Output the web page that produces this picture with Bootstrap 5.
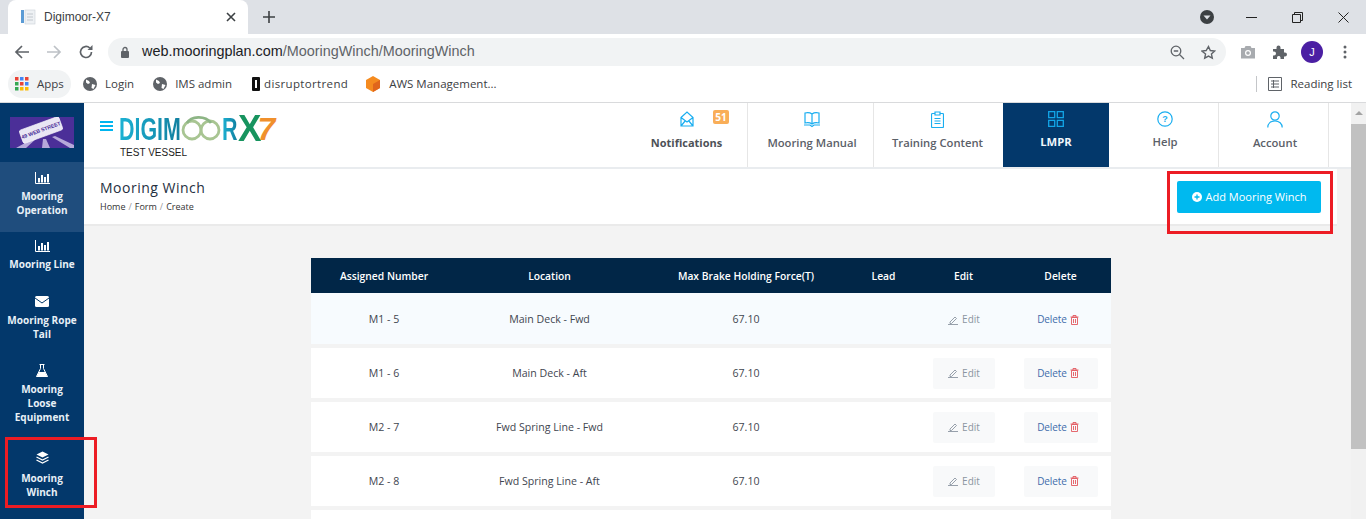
<!DOCTYPE html>
<html lang="en">
<head>
<meta charset="UTF-8">
<title>Digimoor-X7</title>
<link href="https://cdn.jsdelivr.net/npm/bootstrap@5.3.0/dist/css/bootstrap.min.css" rel="stylesheet">
<style>
html, body { height: 519px; overflow: hidden; }
body { font-family: "Open Sans", sans-serif; background: #f3f3f3; position: relative; }
.chrome-font { font-family: "Liberation Sans", sans-serif; color: #3c4043; }
.tabstrip { height: 34px; background: #dee1e6; }
.tab-item { width: 240px; margin-left: 8px; height: 34px; background: #fff; border-radius: 8px 8px 0 0; padding: 0 12px; font-size: 12px; }
.tab-new { margin-left: 14px; }
.win-btns { margin-left: auto; }
.win-btn { width: 46px; }
.toolbar { height: 34px; background: #fff; padding: 2px 0 0 14px; }
.nav-ic { width: 16px; height: 16px; margin-right: 16px; }
.omnibox { width: 1118px; height: 28px; background: #f1f3f4; border-radius: 14px; padding: 0 10px 0 12px; font-size: 14.4px; color: #5f6368; }
.omnibox b { font-weight: 400; color: #202124; }
.avatar { width: 22px; height: 22px; border-radius: 50%; background: #4b1fa3; color: #fff; font-size: 11px; }
.bookmarks { height: 35px; background: #fff; border-bottom: 1px solid #d9dadc; font-family: "Open Sans", sans-serif; font-size: 11.5px; padding: 0 14px 2px 8px; }
.bm-apps { height: 28px; background: #f1f3f4; border-radius: 14px; width: 63px; padding-left: 7px; }
.bm-item { margin-left: 12px; }
.bm-wide { letter-spacing: .35px; }
.bm-sep { width: 1px; height: 16px; background: #c4c6c9; margin-right: 11px; }
.app-area { height: 416px; }
.side-bar { width: 84px; background: #03386b; color: #e8f0f7; flex-shrink: 0; }
.side-logo { height: 59px; padding-top: 14px; }
.side-item { font-size: 10px; font-weight: 700; line-height: 14px; text-align: center; padding: 10px 2px 0; }
.side-item svg { display: block; margin: 0 auto 5px; }
.side-active { background: #1f4d7d; height: 70px; }
.main-col { min-width: 0; }
.top-head { height: 66px; background: #fff; border-bottom: 2px solid #e9ecef; }
.brand-box { width: 251px; padding: 10px 0 0 16px; }
.burger { width: 13px; height: 10px; border-top: 2px solid #00b5ef; border-bottom: 2px solid #00b5ef; position: relative; margin: 8px 6px 0 0; flex-shrink: 0; }
.burger::after { content: ""; position: absolute; left: 0; right: 0; top: 2px; height: 2px; background: #00b5ef; }
.brand-line { height: 32px; }
.brand-name { display: inline-block; font-family: "Liberation Sans", sans-serif; font-weight: 700; font-size: 32px; line-height: 32px; transform: scaleX(.67); transform-origin: left center; background: linear-gradient(90deg, #1cb2d4, #127f9f); -webkit-background-clip: text; background-clip: text; color: transparent; }
.brand-digim { margin-right: -31px; }
.brand-r { margin-right: -8px; }
.brand-x { display: inline-block; font-family: "Liberation Sans", sans-serif; font-weight: 700; font-size: 37px; line-height: 32px; width: 20px; color: #17945f; transform: scaleX(.95); transform-origin: left center; }
.brand-seven { display: inline-block; font-family: "Liberation Sans", sans-serif; font-weight: 700; font-size: 32px; line-height: 32px; color: #f0902c; font-style: italic; }
.vessel { font-family: "Liberation Sans", sans-serif; font-size: 10px; line-height: 12px; color: #222; margin: 2px 0 0 1px; }
.top-link { height: 64px; text-align: center; font-size: 11.25px; font-weight: 600; color: #5b6068; border-left: 1px solid #e6e6e6; padding-top: 8px; position: relative; }
.top-link svg { display: block; margin: 0 auto 7px; }
.link-note { width: 116px; border-left: 0; color: #4d5157; font-weight: 700; padding-right: 5px; font-size: 11px; line-height: 17px; }
.link-manual { width: 126px; padding-left: 3px; }
.link-train { width: 126px; padding-left: 2px; }
.link-lmpr { width: 106px; margin-left: 4px; border-left: 0; background: #03386b; color: #f1f6fb; font-weight: 700; }
.link-help { width: 109px; border-left: 0; padding-left: 3px; }
.link-account { width: 111px; border-right: 1px solid #e6e6e6; padding-left: 3px; }
.note-badge { position: absolute; left: 82px; top: 7px; background: #f9ae58; color: #fff; font-size: 10px; font-weight: 700; border-radius: 2px; line-height: 14px; height: 14px; width: 16px; }
.page-head { height: 57px; width: 1253px; background: #fff; border-bottom: 2px solid #eaeaea; padding: 9px 16px 0; }
.page-title { font-size: 14px; line-height: 20px; color: #253041; font-weight: 400; letter-spacing: .5px; margin: 0; }
.crumbs { font-size: 9px; line-height: 17px; color: #333; }
.crumbs i { font-style: normal; color: #999; margin: 0 3px; }
.add-btn { background: #00b9ef; color: #fff; font-size: 11px; width: 144px; height: 32px; border-radius: 2px; margin-top: 3px; border: 0; padding: 0; }
.scroll-track { width: 15px; background: #f1f1f1; flex-shrink: 0; }
.scroll-thumb { height: 325px; background: #c1c1c1; margin-top: 17px; }
.scroll-up { width: 0; height: 0; border: 4px solid transparent; border-bottom: 4px solid #a3a3a3; border-top: 0; margin: 0 auto; position: relative; top: 8px; }
.table-box { width: 800px; margin: 32px 0 0 227px; }
.tb-head { height: 35px; background: #012647; color: #fff; font-size: 10.3px; font-weight: 600; padding-top: 2px; }
.tb-row { height: 50px; background: #fff; margin-bottom: 4px; font-size: 10.6px; color: #3f4650; }
.tb-first { height: 51px; background: #f7fbfe; padding-top: 2px; }
.tb-text { padding-top: 1px; }
.c1 { width: 146px; text-align: center; }
.c2 { width: 185px; text-align: center; }
.c3 { width: 208px; text-align: center; }
.c4 { width: 67px; text-align: center; }
.c5 { width: 93px; text-align: center; }
.c6 { width: 101px; text-align: center; }
.act-edit { width: 62px; height: 31px; background: #f8f9fa; color: #8b95a1; font-size: 10px; margin: 0 auto; border-radius: 2px; padding-left: 1px; }
.act-del { width: 74px; height: 31px; background: #f8f9fa; color: #3f6cab; font-size: 10px; letter-spacing: -.1px; margin: 0 auto; border-radius: 2px; padding-right: 5px; }
.act-del svg { margin-left: 3px; }
.tb-first .act-edit, .tb-first .act-del { background: #f7fbfe; }
.mark-box { position: absolute; border: 3px solid #ec1c24; pointer-events: none; }
.mark-left { left: 5px; top: 437px; width: 92px; height: 71px; }
.mark-right { left: 1167px; top: 171px; width: 166px; height: 63px; }
</style>
</head>
<body>

<div class="chrome-font">
  <div class="tabstrip d-flex">
    <div class="tab-item d-flex align-items-center">
      <svg width="16" height="16" viewBox="0 0 16 16" class="me-2"><rect x="1" y="1" width="3" height="13" fill="#5b9bd5"/><rect x="5" y="1" width="10" height="14" fill="#eef1f4" stroke="#c9d0d6" stroke-width=".6"/><path d="M7 5h6M7 8h6M7 11h6" stroke="#c2c8ce"/></svg>
      <span>Digimoor-X7</span>
      <svg width="10" height="10" viewBox="0 0 10 10" class="ms-auto"><path d="M1 1l8 8M9 1l-8 8" stroke="#3c4043" stroke-width="1.6"/></svg>
    </div>
    <div class="tab-new d-flex align-items-center"><svg width="14" height="14" viewBox="0 0 14 14"><path d="M7 1v12M1 7h12" stroke="#3c4043" stroke-width="1.6"/></svg></div>
    <div class="win-btns d-flex align-items-center">
      <svg width="14" height="14" viewBox="0 0 14 14" style="margin-right:14px"><circle cx="7" cy="7" r="7" fill="#3c4043"/><path d="M3.5 5.5h7L7 9.5z" fill="#dee1e6"/></svg>
      <div class="win-btn text-center"><svg width="11" height="11" viewBox="0 0 11 11"><path d="M0 5.5h11" stroke="#222"/></svg></div>
      <div class="win-btn text-center"><svg width="11" height="11" viewBox="0 0 11 11"><path d="M.5 2.5h8v8h-8zM2.5 2.5v-2h8v8h-2" fill="none" stroke="#222"/></svg></div>
      <div class="win-btn text-center"><svg width="11" height="11" viewBox="0 0 11 11"><path d="M.5.5l10 10M10.500.5l-10 10" stroke="#222"/></svg></div>
    </div>
  </div>
  <div class="toolbar d-flex align-items-center">
    <svg class="nav-ic" viewBox="0 0 16 16"><path d="M15 8H2M8 2L2 8l6 6" fill="none" stroke="#5f6368" stroke-width="1.7"/></svg>
    <svg class="nav-ic" viewBox="0 0 16 16"><path d="M1 8h13M8 2l6 6-6 6" fill="none" stroke="#bdc1c6" stroke-width="1.7"/></svg>
    <svg class="nav-ic" viewBox="0 0 16 16" style="margin-right:14px"><path d="M13.500 8a5.500 5.500 0 1 1-1.700-4" fill="none" stroke="#5f6368" stroke-width="1.7"/><path d="M14.500 1v5h-5z" fill="#5f6368"/></svg>
    <div class="omnibox d-flex align-items-center">
      <svg width="10" height="12" viewBox="0 0 10 12" class="me-2"><rect x="1" y="5" width="8" height="7" rx="1" fill="#5f6368"/><path d="M3 5V3.500a2 2 0 0 1 4 0V5" fill="none" stroke="#5f6368" stroke-width="1.300"/></svg>
      <span class="ms-1"><b>web.mooringplan.com</b>/MooringWinch/MooringWinch</span>
      <svg width="15" height="15" viewBox="0 0 15 15" class="ms-auto" style="margin-right:16px"><circle cx="6" cy="6" r="4.800" fill="none" stroke="#5f6368" stroke-width="1.300"/><path d="M9.500 9.500l4.500 4.500M3.800 6h4.400" stroke="#5f6368" stroke-width="1.300"/></svg>
      <svg width="15" height="15" viewBox="0 0 24 24"><path d="M12 2.500l2.900 6.300 6.900.8-5.100 4.700 1.400 6.800-6.100-3.400-6.100 3.400 1.400-6.800L1.300 9.600l6.900-.8z" fill="none" stroke="#5f6368" stroke-width="2.200"/></svg>
    </div>
    <svg width="16" height="14" viewBox="0 0 16 14" style="margin-left:14px"><path d="M1 3h3.500l1-2h5l1 2H15v10.500H1z" fill="#a8abaf"/><circle cx="8" cy="8" r="3" fill="#fff"/><circle cx="8" cy="8" r="1.800" fill="#a8abaf"/></svg>
    <svg width="16" height="16" viewBox="0 0 16 16" style="margin-left:16px"><path d="M1 5h3.500V3.500a2 2 0 0 1 4 0V5H12v3.500h1a2 2 0 0 1 0 4h-1V15H8.500v-1.500a1.800 1.800 0 0 0-3.500 0V15H1v-3.500h1a2 2 0 0 0 0-4H1z" fill="#5f6368"/></svg>
    <div class="avatar d-flex align-items-center justify-content-center" style="margin-left:13px">J</div>
    <svg width="4" height="14" viewBox="0 0 4 14" style="margin-left:20px"><circle cx="2" cy="2" r="1.500" fill="#5f6368"/><circle cx="2" cy="7" r="1.500" fill="#5f6368"/><circle cx="2" cy="12" r="1.500" fill="#5f6368"/></svg>
  </div>
  <div class="bookmarks d-flex align-items-center">
    <div class="bm-apps d-flex align-items-center">
      <svg width="14" height="14" viewBox="0 0 14 14" class="me-2"><g><rect x="0" y="0" width="3.500" height="3.500" fill="#ea4335"/><rect x="5" y="0" width="3.500" height="3.500" fill="#4285f4"/><rect x="10" y="0" width="3.500" height="3.500" fill="#ea4335"/><rect x="0" y="5" width="3.500" height="3.500" fill="#34a853"/><rect x="5" y="5" width="3.500" height="3.500" fill="#ea4335"/><rect x="10" y="5" width="3.500" height="3.500" fill="#4285f4"/><rect x="0" y="10" width="3.500" height="3.500" fill="#34a853"/><rect x="5" y="10" width="3.500" height="3.500" fill="#fbbc04"/><rect x="10" y="10" width="3.500" height="3.500" fill="#fbbc04"/></g></svg>
      <span>Apps</span>
    </div>
    <div class="bm-item d-flex align-items-center"><svg width="14" height="14" viewBox="0 0 14 14" class="me-2"><circle cx="7" cy="7" r="7" fill="#5f6368"/><path d="M3 2.500l3 1.500 1 2-2 1-2-1.500zM9 7l3.500 1-2 4-2-1z" fill="#fff"/></svg><span>Login</span></div>
    <div class="bm-item d-flex align-items-center" style="margin-left:19px"><svg width="14" height="14" viewBox="0 0 14 14" class="me-2"><circle cx="7" cy="7" r="7" fill="#5f6368"/><path d="M3 2.500l3 1.500 1 2-2 1-2-1.500zM9 7l3.500 1-2 4-2-1z" fill="#fff"/></svg><span>IMS admin</span></div>
    <div class="bm-item d-flex align-items-center" style="margin-left:20px"><svg width="8" height="14" viewBox="0 0 8 14" class="me-1"><rect width="8" height="14" rx="1" fill="#111"/><rect x="3" y="3" width="2" height="8" fill="#fff"/></svg><span class="bm-wide">disruptortrend</span></div>
    <div class="bm-item d-flex align-items-center" style="margin-left:17px"><svg width="16" height="16" viewBox="0 0 16 16" class="me-2"><path d="M8 0l7 4v8l-7 4-7-4V4z" fill="#f58b1f"/><path d="M8 8l7-4v8l-7 4z" fill="#e0661c"/></svg><span>AWS Management...</span></div>
    <div class="bm-sep ms-auto"></div>
    <svg width="14" height="14" viewBox="0 0 14 14" class="me-2"><path d="M.5.5h13v13H.5z" fill="none" stroke="#5f6368"/><path d="M3 4h8M3 7h8M3 10h8M5.500 3v8" stroke="#5f6368"/></svg>
    <span>Reading list</span>
  </div>
</div>

<div class="app-area d-flex overflow-hidden">
  <nav class="side-bar">
    <div class="side-logo">
      <svg width="64" height="31" viewBox="0 0 64 31" class="d-block" style="margin-left:10px">
        <rect width="64" height="31" fill="#4b2f98"/>
        <path d="M6 31L24 21h3L16 31zM32 31l1-9h3l4 9zM60 31L42 20l3-1 19 9v3z" fill="#b7a9da"/>
        <g transform="rotate(-20 31 13)"><rect x="10" y="6" width="42" height="14" rx="2" fill="#e9e6f4" stroke="#fff" stroke-width=".6"/><text x="31" y="15" font-size="5.200" font-weight="700" text-anchor="middle" fill="#4b2f98" font-family="Liberation Sans, sans-serif">49 WEB STREET</text></g>
      </svg>
    </div>
    <div class="side-item side-active">
      <svg width="15" height="12" viewBox="0 0 15 12"><path d="M.5 0v11.500H15" fill="none" stroke="#fff"/><path d="M3 6h2v4.500H3zM6 3h2v7.500H6zM9 5h2v5.500H9zM12 2h2v8.500h-2z" fill="#fff"/></svg>
      Mooring<br>Operation
    </div>
    <div class="side-item" style="height:55px;padding-top:8px">
      <svg width="15" height="12" viewBox="0 0 15 12"><path d="M.5 0v11.500H15" fill="none" stroke="#fff"/><path d="M3 6h2v4.500H3zM6 3h2v7.500H6zM9 5h2v5.500H9zM12 2h2v8.500h-2z" fill="#fff"/></svg>
      Mooring Line
    </div>
    <div class="side-item" style="height:69px;padding-top:9px">
      <svg width="14" height="11" viewBox="0 0 14 11" style="margin-bottom:6px"><rect width="14" height="11" rx="1.500" fill="#fff"/><path d="M0 2l7 5 7-5" fill="none" stroke="#03386b"/></svg>
      Mooring Rope<br>Tail
    </div>
    <div class="side-item" style="height:89px;padding-top:8px">
      <svg width="12" height="13" viewBox="0 0 12 13"><path d="M3.500.5h5M4.500.5v4L.5 12.500h11L7.500 4.500v-4z" fill="none" stroke="#fff"/><path d="M3 8h6l2.500 5H.5z" fill="#fff"/></svg>
      Mooring<br>Loose<br>Equipment
    </div>
    <div class="side-item" style="padding-top:6px">
      <svg width="13" height="13" viewBox="0 0 13 13" style="margin-bottom:7px"><path d="M6.500.5l6 3-6 3-6-3z" fill="#fff"/><path d="M.5 6l6 3 6-3M.5 9l6 3 6-3" fill="none" stroke="#fff" stroke-width="1.300"/></svg>
      Mooring<br>Winch
    </div>
  </nav>

  <div class="main-col flex-grow-1">
    <header class="top-head d-flex">
      <div class="brand-box d-flex">
        <div class="burger"></div>
        <div>
          <div class="brand-line d-flex align-items-center">
            <span class="brand-name brand-digim">DIGIM</span>
            <svg width="42" height="32" viewBox="0 0 42 32" class="flex-shrink-0"><g fill="none" stroke="#a8c592" stroke-width="2.800"><circle cx="12" cy="17" r="9"/><circle cx="30" cy="17" r="9"/><path d="M7 10c4-7 18-8 24 0" stroke="#8db585"/></g></svg>
            <span class="brand-name brand-r">R</span><span class="brand-x">X</span><span class="brand-seven">7</span>
          </div>
          <div class="vessel">TEST VESSEL</div>
        </div>
      </div>
      <div class="d-flex ms-auto" style="margin-right:22px">
        <div class="top-link link-note">
          <svg width="14" height="16" viewBox="0 0 14 16"><path d="M1 6.500L7 1l6 5.500V15H1zM1 6.500l6 4.500 6-4.500M1 15l4.500-5.500M13 15L8.500 9.500" fill="none" stroke="#1aaef0" stroke-width="1.200"/></svg>
          Notifications
          <span class="note-badge">51</span>
        </div>
        <div class="top-link link-manual">
          <svg width="18" height="17" viewBox="0 0 18 17"><path d="M9 3C7 1.500 4 1.500 2 2v10c2-.5 5-.5 7 1 2-1.500 5-1.500 7-1V2c-2-.5-5-.5-7 1zM9 3v10M1 14h6l2 1.500L11 14h6" fill="none" stroke="#1aaef0" stroke-width="1.200"/></svg>
          Mooring Manual
        </div>
        <div class="top-link link-train">
          <svg width="13" height="17" viewBox="0 0 13 17"><path d="M4 2.500H1.500a1 1 0 0 0-1 1v12a1 1 0 0 0 1 1h10a1 1 0 0 0 1-1v-12a1 1 0 0 0-1-1H9M4 1h5v3H4zM3.500 7.500h6M3.500 10h6M3.500 12.500h6" fill="none" stroke="#1aaef0" stroke-width="1.200"/></svg>
          Training Content
        </div>
        <div class="top-link link-lmpr">
          <svg width="16" height="16" viewBox="0 0 16 16"><path d="M.7.7h6v6h-6zM9.300.7h6v6h-6zM.7 9.300h6v6h-6zM9.300 9.300h6v6h-6z" fill="none" stroke="#12a6e8" stroke-width="1.300"/></svg>
          LMPR
        </div>
        <div class="top-link link-help">
          <svg width="16" height="16" viewBox="0 0 16 16"><circle cx="8" cy="8" r="7.200" fill="none" stroke="#1aaef0" stroke-width="1.200"/><text x="8" y="11" font-size="9" font-weight="700" text-anchor="middle" fill="#1aaef0" font-family="Liberation Sans, sans-serif">?</text></svg>
          Help
        </div>
        <div class="top-link link-account">
          <svg width="16" height="17" viewBox="0 0 16 17"><circle cx="8" cy="5" r="4.200" fill="none" stroke="#1aaef0" stroke-width="1.200"/><path d="M.8 16.500c0-4 3-6.500 7.200-6.500s7.200 2.500 7.200 6.500" fill="none" stroke="#1aaef0" stroke-width="1.200"/></svg>
          Account
        </div>
      </div>
    </header>

    <section class="page-head d-flex justify-content-between">
      <div>
        <h1 class="page-title">Mooring Winch</h1>
        <div class="crumbs">Home<i>/</i>Form<i>/</i>Create</div>
      </div>
      <button class="add-btn d-flex align-items-center justify-content-center" type="button">
        <svg width="10" height="10" viewBox="0 0 10 10" class="me-1"><circle cx="5" cy="5" r="5" fill="#fff"/><path d="M5 2.500v5M2.500 5h5" stroke="#00b9ef" stroke-width="1.300"/></svg>
        Add Mooring Winch
      </button>
    </section>

    <div class="table-box">
      <div class="tb-head d-flex align-items-center">
        <div class="c1">Assigned Number</div><div class="c2">Location</div><div class="c3">Max Brake Holding Force(T)</div><div class="c4">Lead</div><div class="c5">Edit</div><div class="c6">Delete</div>
      </div>
      <div class="tb-row tb-first d-flex align-items-center">
        <div class="c1">M1 - 5</div><div class="c2">Main Deck - Fwd</div><div class="c3">67.10</div><div class="c4"></div>
        <div class="c5"><div class="act-edit d-flex align-items-center justify-content-center"><svg width="10" height="10" viewBox="0 0 10 10" class="me-1"><path d="M2 7l5-5 1.500 1.500-5 5H2zM0 9.500h10" fill="none" stroke="#8b95a1" stroke-width=".9"/></svg>Edit</div></div>
        <div class="c6"><div class="act-del d-flex align-items-center justify-content-center">Delete<svg width="9" height="10" viewBox="0 0 8 10"><path d="M1 2.500h6v7H1zM0 2h8M2.500 2V.5h3V2M3 4v4M5 4v4" fill="none" stroke="#e2585f" stroke-width=".9"/></svg></div></div>
      </div>
      <div class="tb-row d-flex align-items-center">
        <div class="c1 tb-text">M1 - 6</div><div class="c2 tb-text">Main Deck - Aft</div><div class="c3 tb-text">67.10</div><div class="c4"></div>
        <div class="c5"><div class="act-edit d-flex align-items-center justify-content-center"><svg width="10" height="10" viewBox="0 0 10 10" class="me-1"><path d="M2 7l5-5 1.500 1.500-5 5H2zM0 9.500h10" fill="none" stroke="#8b95a1" stroke-width=".9"/></svg>Edit</div></div>
        <div class="c6"><div class="act-del d-flex align-items-center justify-content-center">Delete<svg width="9" height="10" viewBox="0 0 8 10"><path d="M1 2.500h6v7H1zM0 2h8M2.500 2V.5h3V2M3 4v4M5 4v4" fill="none" stroke="#e2585f" stroke-width=".9"/></svg></div></div>
      </div>
      <div class="tb-row d-flex align-items-center">
        <div class="c1 tb-text">M2 - 7</div><div class="c2 tb-text">Fwd Spring Line - Fwd</div><div class="c3 tb-text">67.10</div><div class="c4"></div>
        <div class="c5"><div class="act-edit d-flex align-items-center justify-content-center"><svg width="10" height="10" viewBox="0 0 10 10" class="me-1"><path d="M2 7l5-5 1.500 1.500-5 5H2zM0 9.500h10" fill="none" stroke="#8b95a1" stroke-width=".9"/></svg>Edit</div></div>
        <div class="c6"><div class="act-del d-flex align-items-center justify-content-center">Delete<svg width="9" height="10" viewBox="0 0 8 10"><path d="M1 2.500h6v7H1zM0 2h8M2.500 2V.5h3V2M3 4v4M5 4v4" fill="none" stroke="#e2585f" stroke-width=".9"/></svg></div></div>
      </div>
      <div class="tb-row d-flex align-items-center">
        <div class="c1 tb-text">M2 - 8</div><div class="c2 tb-text">Fwd Spring Line - Aft</div><div class="c3 tb-text">67.10</div><div class="c4"></div>
        <div class="c5"><div class="act-edit d-flex align-items-center justify-content-center"><svg width="10" height="10" viewBox="0 0 10 10" class="me-1"><path d="M2 7l5-5 1.500 1.500-5 5H2zM0 9.500h10" fill="none" stroke="#8b95a1" stroke-width=".9"/></svg>Edit</div></div>
        <div class="c6"><div class="act-del d-flex align-items-center justify-content-center">Delete<svg width="9" height="10" viewBox="0 0 8 10"><path d="M1 2.500h6v7H1zM0 2h8M2.500 2V.5h3V2M3 4v4M5 4v4" fill="none" stroke="#e2585f" stroke-width=".9"/></svg></div></div>
      </div>
      <div class="tb-row"></div>
    </div>
  </div>

  <div class="scroll-track">
    <div class="scroll-up"></div>
    <div class="scroll-thumb"></div>
  </div>
</div>

<div class="mark-box mark-left"></div>
<div class="mark-box mark-right"></div>

<script src="https://cdn.jsdelivr.net/npm/bootstrap@5.3.0/dist/js/bootstrap.bundle.min.js"></script>
</body>
</html>
